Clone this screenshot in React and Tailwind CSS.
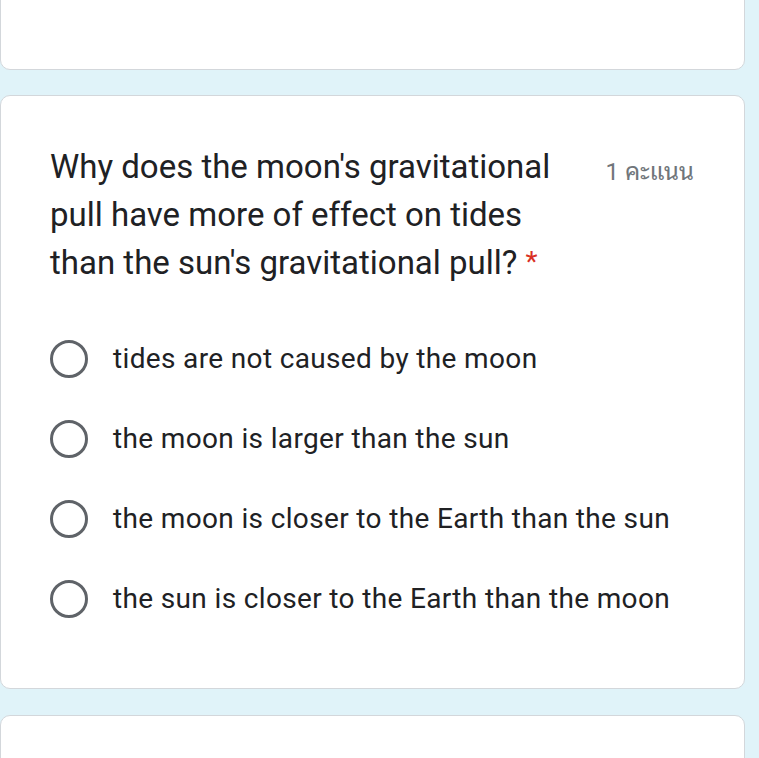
export default function App() {
  const options = [
    "tides are not caused by the moon",
    "the moon is larger than the sun",
    "the moon is closer to the Earth than the sun",
    "the sun is closer to the Earth than the moon",
  ];
  return (
    <div className="w-[759px] h-[758px] overflow-hidden bg-[#e0f3f9] flex flex-col" style={{ fontFamily: "Roboto, 'Noto Sans', sans-serif" }}>
      <div className="mt-[-30px] h-[100px] w-[745px] shrink-0 bg-white border border-[#d3d7db] rounded-[10px]"></div>
      <div className="mt-[25px] h-[594px] w-[745px] shrink-0 bg-white border border-[#d3d7db] rounded-[10px] pt-[47px] pl-[49px] pr-[50px]">
        <div className="flex justify-between">
          <div className="w-[520px] text-[33px] leading-[48px] text-[#202124]">
            Why does the moon's gravitational pull have more of effect on tides than the sun's gravitational pull?<span className="text-[#d93025] text-[28px] leading-[28px] ml-[8px] relative top-[-3px]">*</span>
          </div>
          <div className="pt-[5px] text-[24px] leading-[48px] text-[#70757a] whitespace-nowrap" style={{ fontFamily: "Roboto, 'Noto Sans Thai Looped', 'Noto Serif Thai', Loma, Garuda, 'Tlwg Typo', 'Noto Sans Thai', 'Noto Sans', sans-serif" }}>1 คะแนน</div>
        </div>
        <div className="mt-[32px] flex flex-col">
          {options.map((o) => (
            <div key={o} className="h-[80px] flex items-center">
              <div className="w-[38px] h-[38px] rounded-full border-[3px] border-[#5f6368] shrink-0"></div>
              <div className="ml-[25px] text-[28px] text-[#202124] tracking-[0.35px]">{o}</div>
            </div>
          ))}
        </div>
      </div>
      <div className="mt-[26px] h-[100px] w-[745px] shrink-0 bg-white border border-[#d3d7db] rounded-[10px]"></div>
    </div>
  );
}
